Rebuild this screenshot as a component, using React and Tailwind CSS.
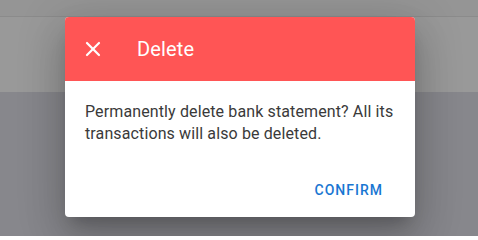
import { X } from "lucide-react";

export default function App() {
  return (
    <div
      className="relative w-[478px] h-[236px] overflow-hidden bg-[#87878c]"
      style={{ fontFamily: "Roboto, 'Liberation Sans', sans-serif" }}
    >
      {/* page behind the overlay */}
      <div className="h-[17px] bg-[#959595] border-b border-[#8b8b8b]" />
      <div className="h-[75px] bg-[#999999]" />

      {/* dialog */}
      <div className="absolute left-[65px] top-[17px] w-[350px] h-[200px] rounded-[4px] overflow-hidden bg-white flex flex-col shadow-[0_11px_15px_-7px_rgba(0,0,0,0.2),0_24px_38px_3px_rgba(0,0,0,0.14),0_9px_46px_8px_rgba(0,0,0,0.12)]">
        <div className="h-16 shrink-0 bg-[#ff5555] flex items-center px-4 text-white">
          <X size={24} strokeWidth={2.2} />
          <span className="ml-8 text-[20px] leading-none tracking-[0.15px]">Delete</span>
        </div>
        <div className="px-5 pt-5 text-[16px] leading-[22px] tracking-[0.12px] text-[#3a3a3a]">
          Permanently delete bank statement? All its transactions will also be
          deleted.
        </div>
        <div className="mt-auto flex justify-end px-2 pb-[11px]">
          <button className="px-6 py-2 text-[14px] leading-4 font-medium tracking-[1px] text-[#1976d2] uppercase">
            Confirm
          </button>
        </div>
      </div>
    </div>
  );
}
